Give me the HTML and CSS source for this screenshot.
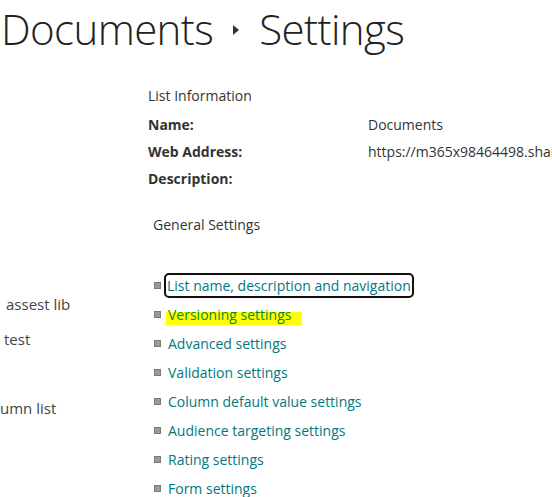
FILE: index.html
```html
<!DOCTYPE html>
<html lang="en">
<head>
  <meta charset="UTF-8">
  <title>Documents - Settings</title>
  <link rel="stylesheet" href="styles.css">
</head>
<body>
  <h1 class="page-title">
    <span>Documents</span>
    <span class="crumb-arrow"></span>
    <span>Settings</span>
  </h1>

  <div class="page">
    <nav class="quick-launch">
      <a class="nav-item nav-assets" href="#">assest lib</a>
      <a class="nav-item nav-test" href="#">test</a>
      <a class="nav-item nav-column" href="#">umn list</a>
    </nav>

    <main class="settings">
      <h2 class="section-title">List Information</h2>
      <div class="info">
        <div class="info-label">Name:</div>
        <div class="info-value">Documents</div>
        <div class="info-label">Web Address:</div>
        <div class="info-value">https://m365x98464498.sharepoint.com/sites/Documents</div>
        <div class="info-label">Description:</div>
        <div class="info-value"></div>
      </div>

      <h2 class="group-title">General Settings</h2>
      <ul class="links">
        <li><a class="focused" href="#">List name, description and navigation</a></li>
        <li><a class="marked" href="#">Versioning settings</a></li>
        <li><a href="#">Advanced settings</a></li>
        <li><a href="#">Validation settings</a></li>
        <li><a href="#">Column default value settings</a></li>
        <li><a href="#">Audience targeting settings</a></li>
        <li><a href="#">Rating settings</a></li>
        <li><a href="#">Form settings</a></li>
      </ul>
    </main>
  </div>
</body>
</html>
```

FILE: styles.css
```css
body {
  margin: 0;
  font-family: "Open Sans", "Noto Sans", sans-serif;
  color: #333;
  background: #fff;
  overflow: hidden;
}

a {
  text-decoration: none;
}

.page-title {
  margin: 0;
  padding-left: 1px;
  display: flex;
  align-items: center;
  gap: 20px;
  font-size: 42px;
  font-weight: 300;
  letter-spacing: -0.6px;
  color: #222;
  white-space: nowrap;
  line-height: normal;
}

.crumb-arrow {
  width: 0;
  height: 0;
  border-top: 5px solid transparent;
  border-bottom: 5px solid transparent;
  border-left: 6px solid #333;
  margin-top: 2px;
}

.page {
  display: grid;
  grid-template-columns: 148px 1fr;
}

.quick-launch {
  display: flex;
  flex-direction: column;
  padding-top: 237px;
}

.nav-item {
  font-size: 15px;
  color: #444;
  white-space: nowrap;
  line-height: 20px;
}

.nav-assets {
  padding-left: 6px;
}

.nav-test {
  padding-left: 4px;
  margin-top: 15px;
}

.nav-column {
  margin-top: 49px;
}

.settings {
  padding-top: 29px;
  font-size: 14px;
  white-space: nowrap;
  overflow: hidden;
}

.section-title,
.group-title {
  margin: 0;
  font-size: 14px;
  font-weight: 400;
  color: #333;
  line-height: 20px;
}

.info {
  display: grid;
  grid-template-columns: 220px 1fr;
  row-gap: 6px;
  margin-top: 8px;
  line-height: 21px;
}

.info-label {
  font-weight: 700;
  color: #333;
}

.info-value {
  color: #333;
}

.group-title {
  margin: 26px 0 0 5px;
}

.links {
  list-style: none;
  margin: 40px 0 0 6px;
  padding: 0;
  display: flex;
  flex-direction: column;
  gap: 8px;
}

.links li {
  display: flex;
  align-items: center;
  gap: 7px;
  line-height: 21px;
}

.links li::before {
  content: "";
  width: 5px;
  height: 5px;
  background: #9a9a9a;
  border: 1px solid #7a7a7a;
  flex: none;
}

.links a {
  color: #03787c;
}

.links a.focused {
  outline: 2px solid #111;
  border-radius: 3px;
  padding: 0 1px;
  margin-left: -2px;
}

.links a.marked {
  color: #0a8a2a;
  background: linear-gradient(to bottom, transparent 40%, #ffff00 40%, #ffff00 100%);
  padding: 0 11px 0 2px;
  margin-left: -2px;
}
```
